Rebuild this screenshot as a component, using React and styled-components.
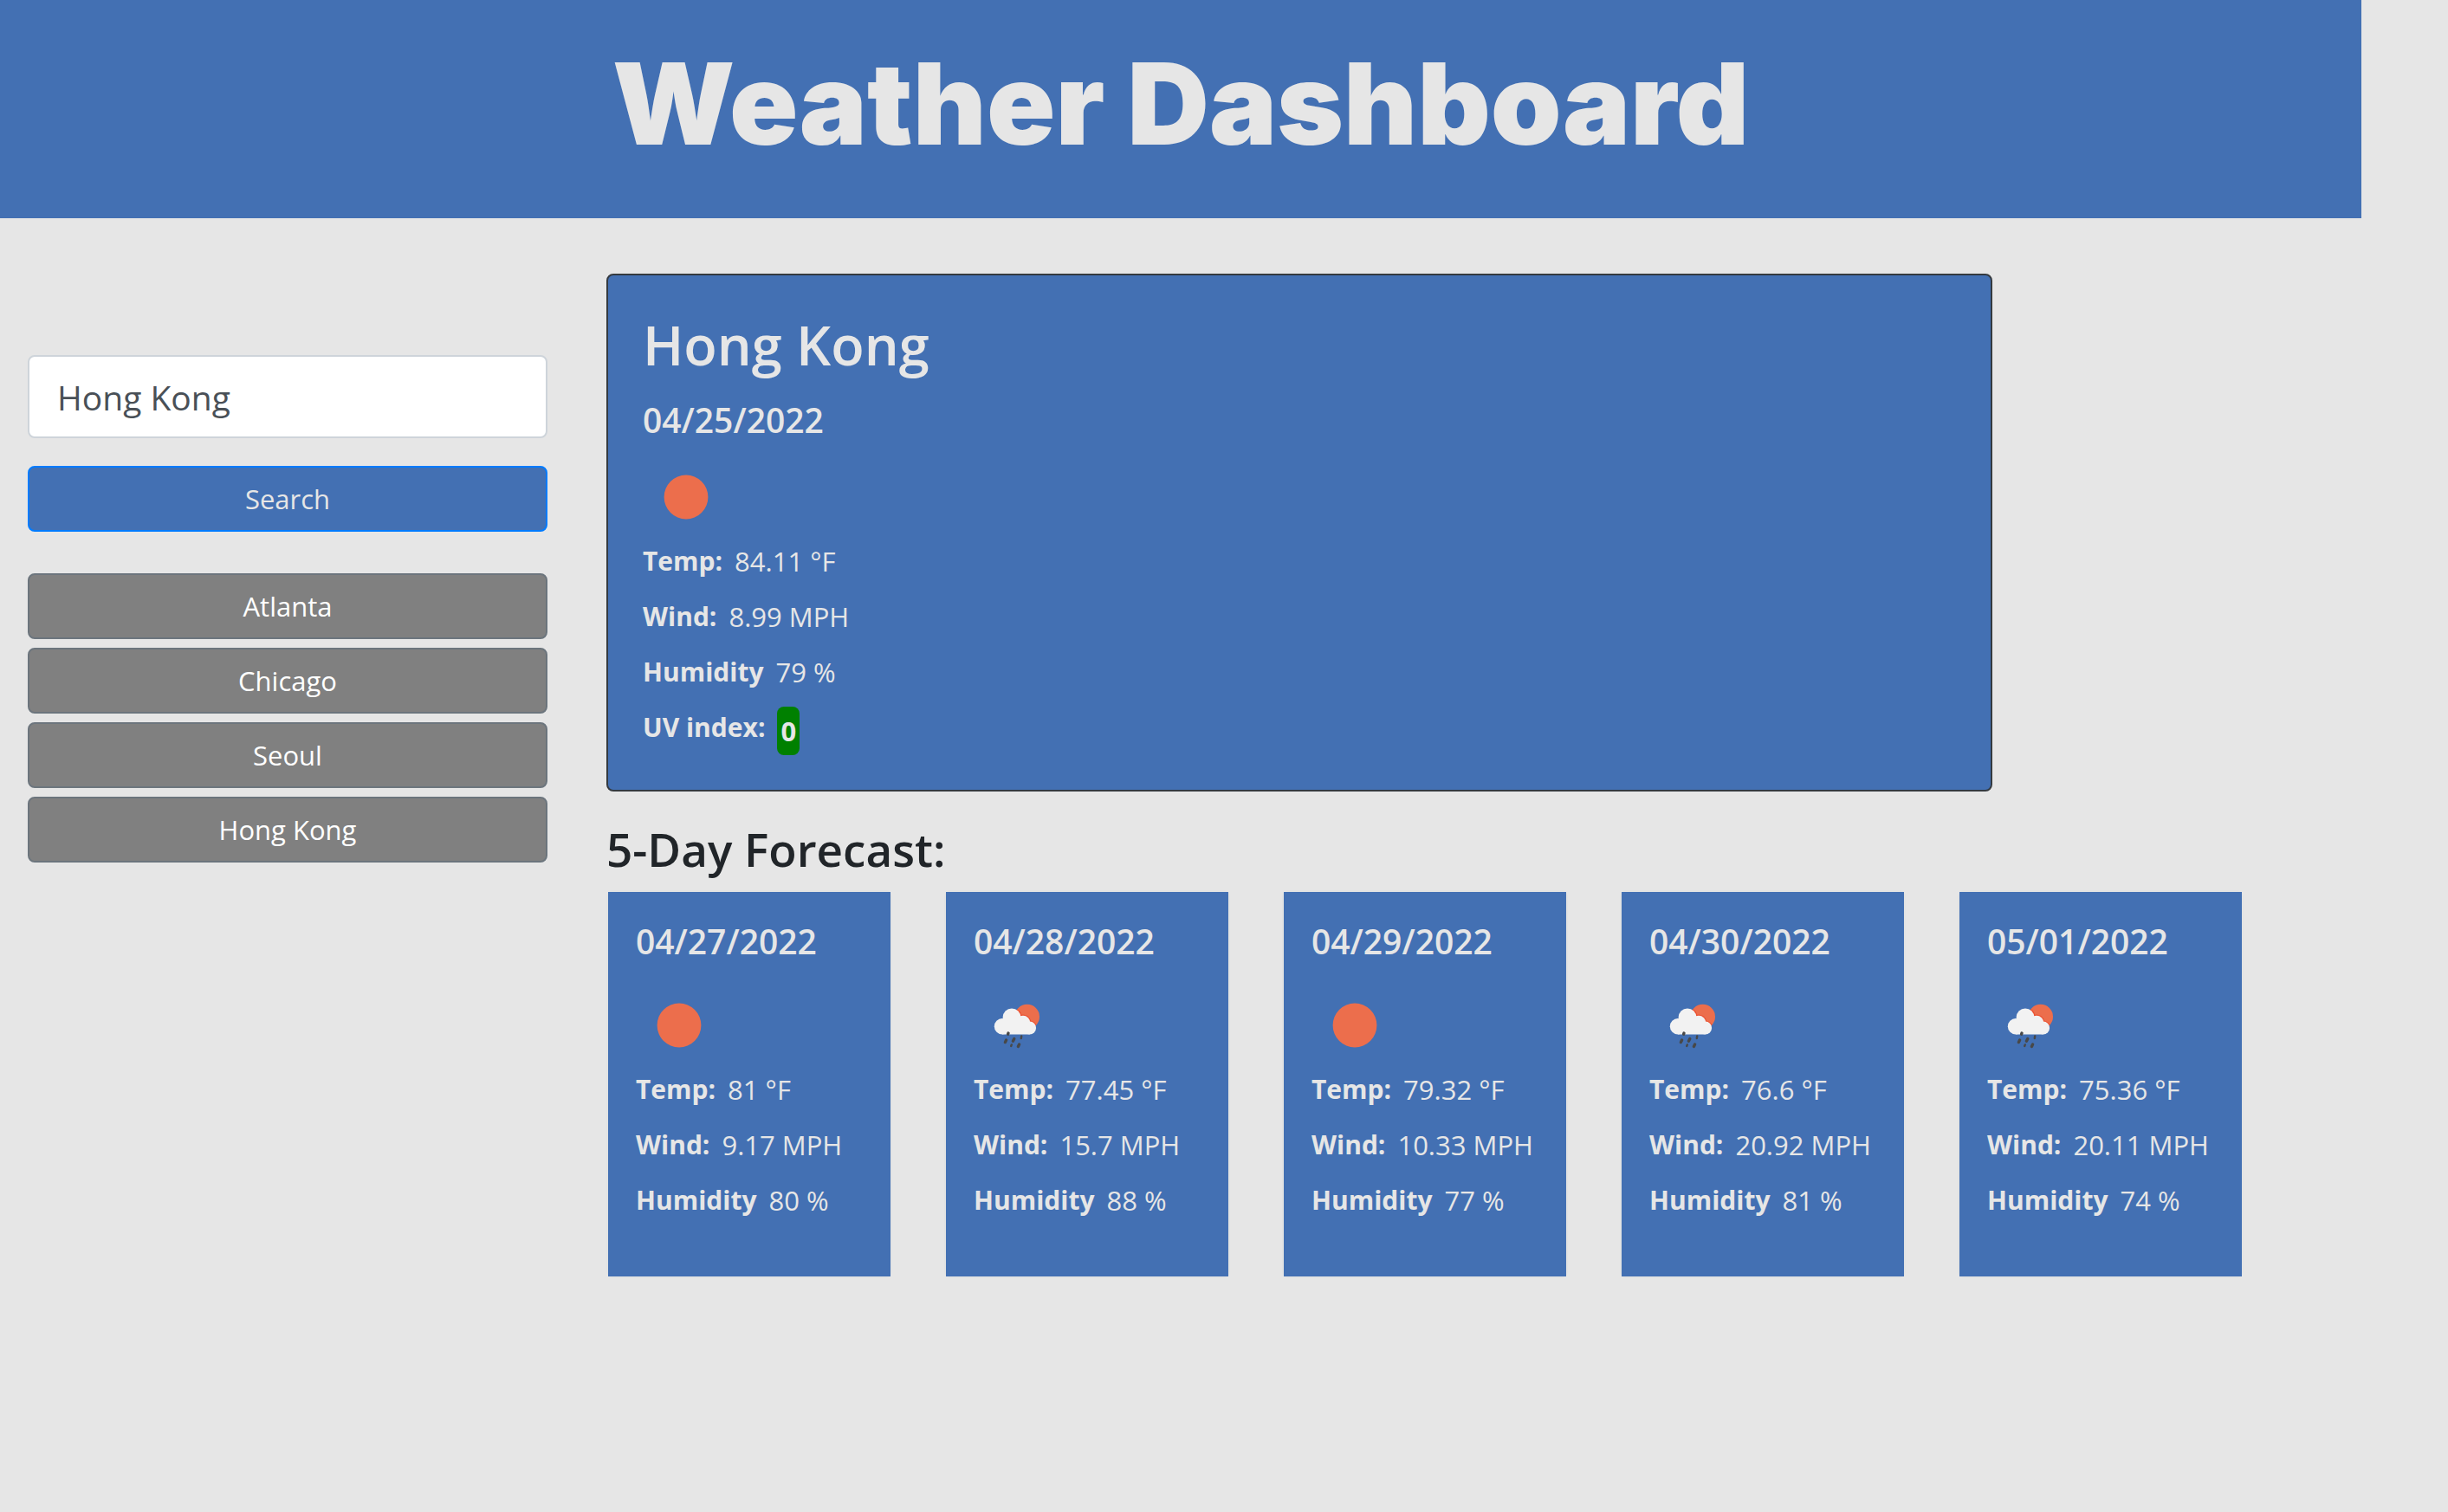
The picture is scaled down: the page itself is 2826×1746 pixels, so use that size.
import React, { useState } from "react";
import styled, { createGlobalStyle, css } from "styled-components";

const color = {
  page: "#e6e6e6",
  blue: "#4370b3",
  ink: "#212529",
  dark: "#343a40",
  sun: "#ec6e4c",
};

const GlobalStyle = createGlobalStyle`
  *, *::before, *::after { box-sizing: border-box; }
  body {
    margin: 0;
    background: ${color.page};
    color: ${color.ink};
    font-family: "Open Sans", "Noto Sans", sans-serif;
    font-size: 31px;
    line-height: 48px;
  }
  h1, h2, h3, p, dl, dd, ul { margin: 0; padding: 0; }
`;

const Page = styled.div`
  padding-right: 100px;
`;

const Header = styled.header`
  padding: 43px 32px 55px;
  background: ${color.blue};
  text-align: center;
`;

const SiteTitle = styled.h1`
  color: ${color.page};
  font-family: Inter, "Noto Sans", sans-serif;
  font-size: 131px;
  font-weight: 900;
  line-height: 154px;
`;

const Layout = styled.div`
  display: grid;
  grid-template-columns: minmax(280px, 600px) minmax(0, 1fr);
  column-gap: 68px;
  align-items: start;
  padding: 64px 32px;
`;

const Sidebar = styled.aside`
  padding-top: 94px;
`;

const SearchForm = styled.form`
  display: flex;
  flex-direction: column;
  gap: 32px;
`;

const CityInput = styled.input`
  width: 100%;
  height: 96px;
  padding: 16px 32px;
  border: 2px solid #ced4da;
  border-radius: 8px;
  background: #fff;
  color: #495057;
  font-family: inherit;
  font-size: 39px;
  line-height: 60px;
`;

const Button = styled.button`
  width: 100%;
  padding: 12px 24px;
  border: 2px solid;
  border-radius: 8px;
  font-family: inherit;
  font-size: 31px;
  line-height: 48px;
  text-align: center;
  cursor: pointer;
  ${({ $variant }) =>
    $variant === "primary"
      ? css`
          border-color: #007bff;
          background: ${color.blue};
          color: ${color.page};
        `
      : css`
          border-color: #6c757d;
          background: #808080;
          color: #fff;
        `}
`;

const History = styled.ul`
  display: flex;
  flex-direction: column;
  gap: 10px;
  margin-top: 48px;
  list-style: none;
`;

const TodayCard = styled.section`
  max-width: 1600px;
  padding: 40px;
  border: 2px solid ${color.dark};
  border-radius: 8px;
  background: ${color.blue};
  color: ${color.page};
`;

const CityName = styled.h2`
  margin-bottom: 22px;
  font-size: 63px;
  font-weight: 600;
  line-height: 80px;
`;

const DateHeading = styled.h3`
  margin-bottom: ${({ $gap }) => $gap}px;
  font-size: 39px;
  font-weight: 600;
  line-height: 50px;
`;

const WeatherIcon = styled.svg`
  display: block;
  width: 100px;
  height: 100px;
`;

const Readings = styled.dl`
  display: flex;
  flex-direction: column;
  gap: 16px;
`;

const Reading = styled.div`
  display: flex;
  gap: 14px;

  dt {
    font-size: 30px;
    font-weight: 700;
  }
`;

const UvBadge = styled.span`
  display: block;
  padding: 4px;
  border-radius: 8px;
  background: #008000;
  font-weight: 700;
`;

const ForecastTitle = styled.h2`
  margin: 32px 0 12px;
  font-size: 53px;
  font-weight: 600;
  line-height: 70px;
`;

const Forecast = styled.div`
  display: grid;
  grid-template-columns: repeat(5, minmax(0, 1fr));
  column-gap: 60px;
  max-width: 1890px;
`;

const DayCard = styled.article`
  border: 2px solid #e2e3e3;
  border-radius: 8px;
`;

const DayBody = styled.div`
  padding: 32px 32px 64px;
  background: ${color.blue};
  color: ${color.page};
  white-space: nowrap;
`;

function Sun() {
  return (
    <WeatherIcon viewBox="0 0 100 100" role="img" aria-label="Clear sky">
      <circle cx="50" cy="50" r="25.4" fill={color.sun} />
    </WeatherIcon>
  );
}

function CloudShape(props) {
  return (
    <g {...props}>
      <circle cx="33" cy="51.2" r="9.2" />
      <circle cx="44" cy="40.8" r="10.4" />
      <circle cx="57" cy="47" r="8.2" />
      <circle cx="64.7" cy="53" r="7.4" />
      <path d="M33 45 H60 L64.7 50 V60.4 H33 Z" />
    </g>
  );
}

function Rain() {
  return (
    <WeatherIcon viewBox="0 0 100 100" role="img" aria-label="Rain with sun">
      <defs>
        <clipPath id="rain-sun">
          <circle cx="61.7" cy="40" r="14.3" />
        </clipPath>
      </defs>
      <circle cx="61.7" cy="40" r="14.3" fill={color.sun} />
      <g clipPath="url(#rain-sun)">
        <CloudShape fill="#eb5030" stroke="#eb5030" strokeWidth="2.4" />
      </g>
      <CloudShape fill="#f2f2f2" />
      <g stroke="#484848" strokeLinecap="round">
        <path
          strokeWidth="3.4"
          d="M40 59 L39.6 60.2 M37.6 67 L36.4 69.6 M46.8 65.4 L45.4 68.2 M52.6 72 L51.4 74.4"
        />
        <path strokeWidth="2.4" d="M55.2 62.4 L54.8 65 M43.8 72.4 L43.2 74" />
      </g>
    </WeatherIcon>
  );
}

function ReadingRow({ label, children }) {
  return (
    <Reading>
      <dt>{label}</dt>
      <dd>{children}</dd>
    </Reading>
  );
}

function WeatherReadings({ temp, wind, humidity, children }) {
  return (
    <Readings>
      <ReadingRow label="Temp:">{temp} °F</ReadingRow>
      <ReadingRow label="Wind:">{wind} MPH</ReadingRow>
      <ReadingRow label="Humidity">{humidity} %</ReadingRow>
      {children}
    </Readings>
  );
}

const cities = ["Atlanta", "Chicago", "Seoul", "Hong Kong"];

const days = [
  { date: "04/27/2022", Icon: Sun, temp: "81", wind: "9.17", humidity: "80" },
  { date: "04/28/2022", Icon: Rain, temp: "77.45", wind: "15.7", humidity: "88" },
  { date: "04/29/2022", Icon: Sun, temp: "79.32", wind: "10.33", humidity: "77" },
  { date: "04/30/2022", Icon: Rain, temp: "76.6", wind: "20.92", humidity: "81" },
  { date: "05/01/2022", Icon: Rain, temp: "75.36", wind: "20.11", humidity: "74" },
];

export default function App() {
  const [city, setCity] = useState("Hong Kong");

  return (
    <>
      <GlobalStyle />
      <Page>
        <Header>
          <SiteTitle>Weather Dashboard</SiteTitle>
        </Header>
        <Layout>
          <Sidebar>
            <SearchForm onSubmit={(event) => event.preventDefault()}>
              <CityInput
                type="text"
                aria-label="City"
                value={city}
                onChange={(event) => setCity(event.target.value)}
              />
              <Button type="submit" $variant="primary">
                Search
              </Button>
            </SearchForm>
            <History>
              {cities.map((name) => (
                <li key={name}>
                  <Button type="button" onClick={() => setCity(name)}>
                    {name}
                  </Button>
                </li>
              ))}
            </History>
          </Sidebar>
          <main>
            <TodayCard>
              <CityName>Hong Kong</CityName>
              <DateHeading $gap={14}>04/25/2022</DateHeading>
              <Sun />
              <WeatherReadings temp="84.11" wind="8.99" humidity="79">
                <ReadingRow label="UV index:">
                  <UvBadge>0</UvBadge>
                </ReadingRow>
              </WeatherReadings>
            </TodayCard>
            <ForecastTitle>5-Day Forecast:</ForecastTitle>
            <Forecast>
              {days.map(({ date, Icon, temp, wind, humidity }) => (
                <DayCard key={date}>
                  <DayBody>
                    <DateHeading $gap={22}>{date}</DateHeading>
                    <Icon />
                    <WeatherReadings temp={temp} wind={wind} humidity={humidity} />
                  </DayBody>
                </DayCard>
              ))}
            </Forecast>
          </main>
        </Layout>
      </Page>
    </>
  );
}
